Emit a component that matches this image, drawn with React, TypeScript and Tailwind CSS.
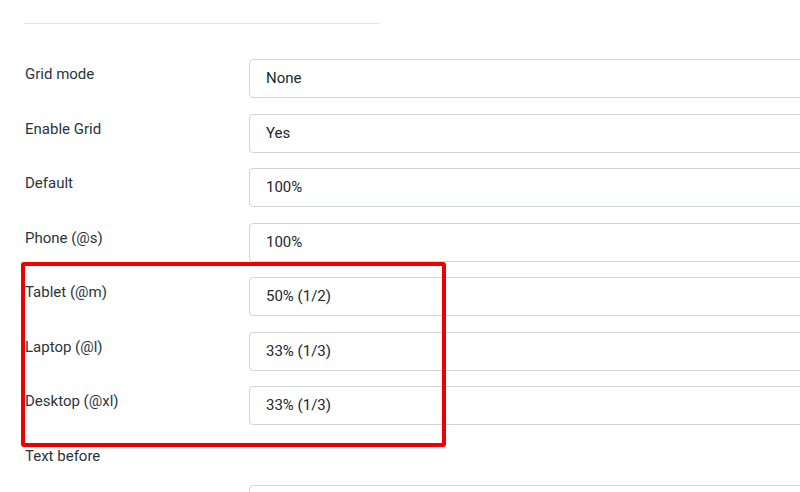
import React from 'react';

const rows = [
  { label: 'Grid mode', value: 'None' },
  { label: 'Enable Grid', value: 'Yes' },
  { label: 'Default', value: '100%' },
  { label: 'Phone (@s)', value: '100%' },
  { label: 'Tablet (@m)', value: '50% (1/2)' },
  { label: 'Laptop (@l)', value: '33% (1/3)' },
  { label: 'Desktop (@xl)', value: '33% (1/3)' },
];

const Field: React.FC<{ value?: string }> = ({ value }) => (
  <div className="h-[39px] w-[620px] shrink-0 rounded-[4px] border border-[#cfd6dd] bg-white pl-4 flex items-center text-[15px] text-[#22272c]">
    {value}
  </div>
);

const App: React.FC = () => {
  return (
    <div
      className="relative h-[492px] w-[800px] overflow-hidden bg-white pl-6"
      style={{ fontFamily: 'Roboto, "Liberation Sans", sans-serif' }}
    >
      <div className="mt-[23px] h-px w-[356px] bg-[#e3e6ea]" />

      <div className="mt-[35px] flex flex-col gap-[15.5px]">
        {rows.map(row => (
          <div key={row.label} className="flex">
            <div className="w-[225px] shrink-0 pl-px pt-[5px] text-[15px] leading-5 text-[#2a3440]">
              {row.label}
            </div>
            <Field value={row.value} />
          </div>
        ))}
        <div className="h-[29px] pl-px pt-[5px] text-[15px] leading-5 text-[#2a3440]">Text before</div>
        <div className="pl-[225px]">
          <Field />
        </div>
      </div>

      {/* highlight */}
      <div className="absolute left-[21px] top-[262px] h-[185px] w-[425px] rounded-[3px] border-4 border-[#ee0000]" />
    </div>
  );
};

export default App;
